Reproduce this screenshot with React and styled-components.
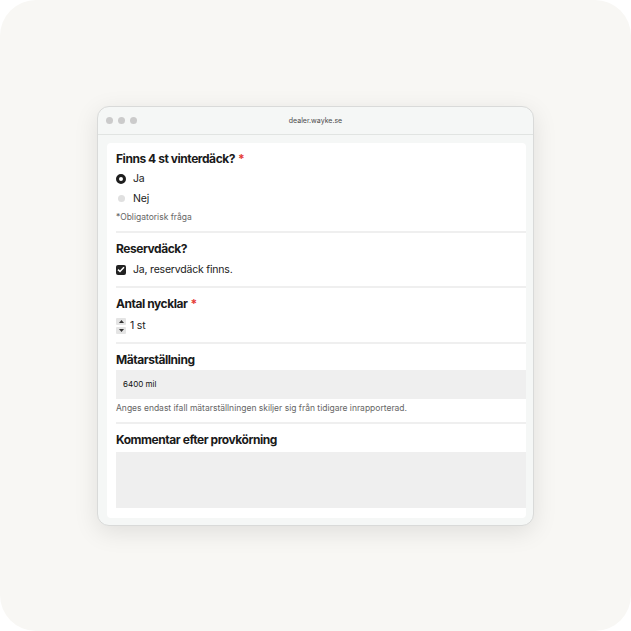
import styled, { createGlobalStyle } from "styled-components";

const GlobalStyle = createGlobalStyle`
  body {
    margin: 0;
    background: #ffffff;
    font-family: Inter, "Noto Sans", sans-serif;
  }
`;

const Stage = styled.div`
  width: 631px;
  height: 631px;
  border-radius: 36px;
  background: #f8f7f4;
  display: flex;
  align-items: center;
  justify-content: center;
`;

const Window = styled.div`
  width: 437px;
  height: 420px;
  box-sizing: border-box;
  border: 1px solid #d9dad9;
  border-radius: 12px;
  background: #f5f7f6;
  box-shadow: 0 6px 24px rgba(0, 0, 0, 0.1);
  display: flex;
  flex-direction: column;
  overflow: hidden;
`;

const TitleBar = styled.div`
  height: 27px;
  flex-shrink: 0;
  border-bottom: 1px solid #e1e4e2;
  display: flex;
  align-items: center;
  position: relative;
  padding-left: 8px;
`;

const Dots = styled.div`
  display: flex;
  gap: 5px;
`;

const Dot = styled.span`
  width: 7px;
  height: 7px;
  border-radius: 50%;
  background: #cbcbcb;
`;

const Url = styled.div`
  position: absolute;
  left: 0;
  right: 0;
  text-align: center;
  font-size: 7px;
  color: #4a4a4a;
`;

const Body = styled.div`
  flex: 1;
  padding: 8px 7px 7px 9px;
  display: flex;
  min-height: 0;
`;

const Panel = styled.div`
  flex: 1;
  background: #ffffff;
  border-radius: 4px;
  padding-left: 9px;
  overflow: hidden;
`;

const Section = styled.div`
  padding: 8px 0 ${(p) => p.$bottom}px;
  border-top: ${(p) => (p.$first ? "none" : "2px solid #efefef")};
  display: flex;
  flex-direction: column;
`;

const Title = styled.div`
  font-size: 12px;
  line-height: 16px;
  font-weight: 700;
  letter-spacing: -0.45px;
  color: #1a1a1a;
  margin-bottom: ${(p) => p.$gap ?? 2}px;
`;

const Star = styled.span`
  color: #e53935;
  margin-left: 3px;
`;

const OptionRow = styled.div`
  height: ${(p) => p.$h ?? 20}px;
  display: flex;
  align-items: center;
  gap: 7px;
  font-size: 10.5px;
  letter-spacing: -0.2px;
  color: #222222;
`;

const RadioSlot = styled.span`
  width: 10px;
  height: 10px;
  display: flex;
  align-items: center;
  justify-content: center;
`;

const Radio = styled.span`
  box-sizing: border-box;
  border-radius: 50%;
  width: ${(p) => (p.$on ? 10 : 7)}px;
  height: ${(p) => (p.$on ? 10 : 7)}px;
  background: ${(p) => (p.$on ? "#ffffff" : "#e0e0e0")};
  border: ${(p) => (p.$on ? "3px solid #1e1e1e" : "none")};
`;

const Check = styled.span`
  width: 10px;
  height: 10px;
  border-radius: 2px;
  background: #222222;
  display: flex;
  align-items: center;
  justify-content: center;
`;

const Spinner = styled.div`
  display: flex;
  flex-direction: column;
  gap: 2px;
  margin-right: -3px;
`;

const SpinBtn = styled.span`
  width: 10px;
  height: 7px;
  border-radius: 1px;
  background: #e4e4e4;
  display: flex;
  align-items: center;
  justify-content: center;
`;

const Note = styled.div`
  font-size: 8.5px;
  line-height: 12px;
  color: #666666;
  margin-top: ${(p) => p.$gap}px;
`;

const Field = styled.div`
  height: ${(p) => p.$h}px;
  background: #efefef;
  display: flex;
  align-items: center;
  padding-left: 7px;
  font-size: 8px;
  color: #111111;
`;

const Arrow = ({ up }) => (
  <svg width="5" height="3" viewBox="0 0 5 3">
    <path d={up ? "M0 3L2.5 0L5 3Z" : "M0 0L2.5 3L5 0Z"} fill="#333" />
  </svg>
);

export default function App() {
  return (
    <>
      <GlobalStyle />
      <Stage>
        <Window>
          <TitleBar>
            <Dots>
              <Dot />
              <Dot />
              <Dot />
            </Dots>
            <Url>dealer.wayke.se</Url>
          </TitleBar>
          <Body>
            <Panel>
              <Section $first $bottom={8}>
                <Title>
                  Finns 4 st vinterdäck?<Star>*</Star>
                </Title>
                <OptionRow>
                  <RadioSlot>
                    <Radio $on />
                  </RadioSlot>
                  Ja
                </OptionRow>
                <OptionRow>
                  <RadioSlot>
                    <Radio />
                  </RadioSlot>
                  Nej
                </OptionRow>
                <Note $gap={2}>*Obligatorisk fråga</Note>
              </Section>
              <Section $bottom={6}>
                <Title $gap={3}>Reservdäck?</Title>
                <OptionRow>
                  <Check>
                    <svg width="8" height="7" viewBox="0 0 8 7">
                      <path d="M1 3.6L3 5.5L7 1.2" stroke="#fff" strokeWidth="1.5" fill="none" />
                    </svg>
                  </Check>
                  Ja, reservdäck finns.
                </OptionRow>
              </Section>
              <Section $bottom={5}>
                <Title $gap={3}>
                  Antal nycklar<Star>*</Star>
                </Title>
                <OptionRow $h={22}>
                  <Spinner>
                    <SpinBtn>
                      <Arrow up />
                    </SpinBtn>
                    <SpinBtn>
                      <Arrow />
                    </SpinBtn>
                  </Spinner>
                  1 st
                </OptionRow>
              </Section>
              <Section $bottom={8}>
                <Title>Mätarställning</Title>
                <Field $h={29}>6400 mil</Field>
                <Note $gap={3}>
                  Anges endast ifall mätarställningen skiljer sig från tidigare inrapporterad.
                </Note>
              </Section>
              <Section $bottom={9}>
                <Title $gap={4}>Kommentar efter provkörning</Title>
                <Field $h={56} />
              </Section>
            </Panel>
          </Body>
        </Window>
      </Stage>
    </>
  );
}
